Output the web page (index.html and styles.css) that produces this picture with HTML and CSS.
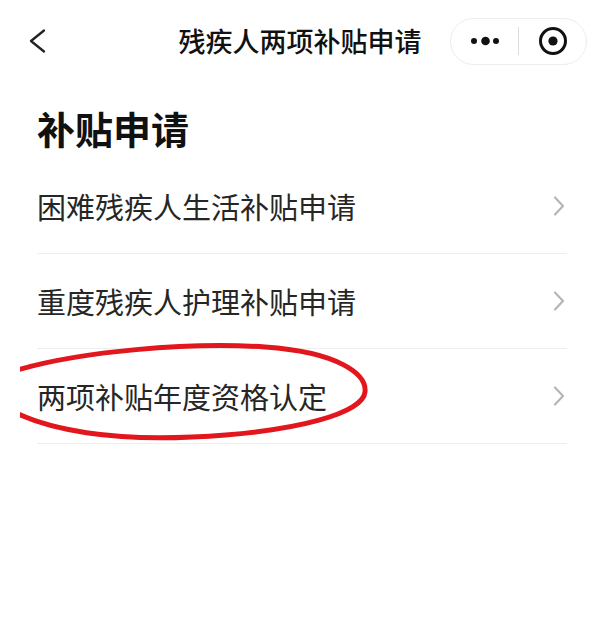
FILE: index.html
```html
<!DOCTYPE html>
<html lang="zh-CN">
<head>
    <meta charset="UTF-8">
    <meta name="viewport" content="width=device-width, initial-scale=1.0">
    <title>残疾人两项补贴申请</title>
    <link rel="stylesheet" href="styles.css">
</head>
<body>

    <!-- 顶部导航 -->
    <div class="navbar">
        <div class="nav-left">
            <svg class="back" width="20" height="26" viewBox="0 0 20 26">
                <path d="M17 2.5 L4 13 L17 23.5" fill="none" stroke="#222" stroke-width="2.3" stroke-linecap="round" stroke-linejoin="round"/>
            </svg>
        </div>
        <div class="nav-title">残疾人两项补贴申请</div>
        <div class="nav-right">
            <div class="capsule">
                <div class="capsule-btn">
                    <svg width="34" height="12" viewBox="0 0 34 12">
                        <circle cx="6" cy="6" r="3" fill="#111"/>
                        <circle cx="17.5" cy="6" r="4.3" fill="#111"/>
                        <circle cx="28" cy="6" r="3" fill="#111"/>
                    </svg>
                </div>
                <div class="capsule-line"></div>
                <div class="capsule-btn">
                    <svg width="30" height="30" viewBox="0 0 30 30">
                        <circle cx="15" cy="15" r="12.5" fill="none" stroke="#111" stroke-width="3"/>
                        <circle cx="15" cy="15" r="4.6" fill="#111"/>
                    </svg>
                </div>
            </div>
        </div>
    </div>

    <!-- 补贴申请列表 -->
    <div class="page">
        <h1 class="section-title">补贴申请</h1>

        <div class="item">
            <span>困难残疾人生活补贴申请</span>
            <svg class="arrow" width="14" height="22" viewBox="0 0 14 22">
                <path d="M3 2.5 L11 11 L3 19.5" fill="none" stroke="#b5b5b5" stroke-width="2.2" stroke-linecap="round" stroke-linejoin="round"/>
            </svg>
        </div>
        <div class="item">
            <span>重度残疾人护理补贴申请</span>
            <svg class="arrow" width="14" height="22" viewBox="0 0 14 22">
                <path d="M3 2.5 L11 11 L3 19.5" fill="none" stroke="#b5b5b5" stroke-width="2.2" stroke-linecap="round" stroke-linejoin="round"/>
            </svg>
        </div>
        <div class="item">
            <span>两项补贴年度资格认定</span>
            <svg class="arrow" width="14" height="22" viewBox="0 0 14 22">
                <path d="M3 2.5 L11 11 L3 19.5" fill="none" stroke="#b5b5b5" stroke-width="2.2" stroke-linecap="round" stroke-linejoin="round"/>
            </svg>
            <!-- 红色圈注 -->
            <svg class="circle-mark" width="360" height="110" viewBox="0 0 360 110">
                <path d="M-6 31 C 60 11, 170 2, 245 7 C 318 12, 347 34, 345 52 C 343 72, 282 92, 172 97 C 92 101, 30 90, -6 72" fill="none" stroke="#e1171d" stroke-width="5" stroke-linecap="round"/>
            </svg>
        </div>
    </div>

</body>
</html>
```

FILE: styles.css
```css
/* 基础 */
body {
    margin: 0;
    background-color: #ffffff;
    color: #222;
    font-family: "Noto Sans CJK SC", "Noto Sans", sans-serif;
}

/* 顶部导航 */
.navbar {
    height: 82px;
    display: grid;
    grid-template-columns: 1fr auto 1fr;
    align-items: center;
}
.nav-left {
    padding-left: 27px;
    display: flex;
    align-items: center;
}
.back {
    display: block;
}
.nav-title {
    font-size: 27px;
    font-weight: 500;
    color: #111;
    line-height: 36px;
}
.nav-right {
    display: flex;
    justify-content: flex-end;
    padding-right: 13px;
}
.capsule {
    width: 137px;
    height: 47px;
    box-sizing: border-box;
    border: 1px solid #ececec;
    border-radius: 24px;
    display: flex;
    align-items: center;
}
.capsule-btn {
    flex: 1;
    display: flex;
    justify-content: center;
    align-items: center;
}
.capsule-btn svg {
    display: block;
}
.capsule-line {
    width: 1px;
    height: 28px;
    background-color: #dedede;
}

/* 列表 */
.page {
    padding: 0 33px 0 37px;
}
.section-title {
    margin: 0;
    padding: 21px 0 6px;
    font-size: 38px;
    font-weight: 700;
    line-height: 50px;
    color: #111;
}
.item {
    position: relative;
    height: 94px;
    border-bottom: 1px solid #eeeeee;
    display: flex;
    align-items: center;
    justify-content: space-between;
    font-size: 29px;
    color: #262626;
}
.arrow {
    display: block;
    margin-right: 1px;
}
.circle-mark {
    position: absolute;
    left: -17px;
    top: -9px;
    pointer-events: none;
}
```
